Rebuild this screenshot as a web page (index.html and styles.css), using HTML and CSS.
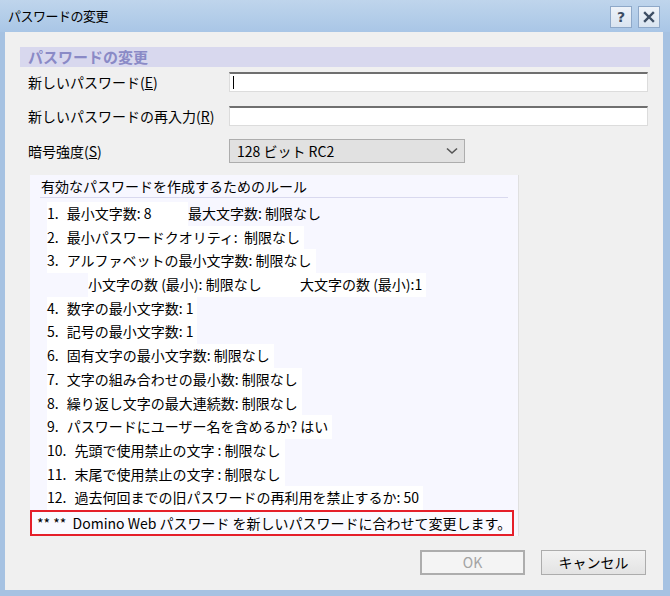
FILE: index.html
```html
<!DOCTYPE html>
<html lang="ja">
<head>
<meta charset="utf-8">
<title>パスワードの変更</title>
<link rel="stylesheet" href="styles.css">
</head>
<body>
<div class="window">
  <div class="titlebar">
    <span class="title">パスワードの変更</span>
    <div class="tb-buttons">
      <span class="tb-btn help">?</span>
      <span class="tb-btn close"><svg width="12" height="12" viewBox="0 0 12 12"><path d="M2 2 L10 10 M10 2 L2 10" stroke="#3c4d63" stroke-width="2.4" stroke-linecap="square"/></svg></span>
    </div>
  </div>
  <div class="client">
    <div class="section-head">パスワードの変更</div>
    <div class="form-row r1">
      <label>新しいパスワード(<u>E</u>)</label>
      <div class="input"><span class="caret"></span></div>
    </div>
    <div class="form-row r2">
      <label>新しいパスワードの再入力(<u>R</u>)</label>
      <div class="input"></div>
    </div>
    <div class="form-row r3">
      <label>暗号強度(<u>S</u>)</label>
      <div class="select">
        <span>128 ビット RC2</span>
        <svg width="12" height="8" viewBox="0 0 12 8"><path d="M1 1.5 L6 6 L11 1.5" fill="none" stroke="#555" stroke-width="1.6"/></svg>
      </div>
    </div>
    <div class="rules">
      <div class="rules-head">有効なパスワードを作成するためのルール</div>
      <ul class="items">
        <li><span class="cell w1"><span class="n">1.</span>最小文字数: 8</span><span>最大文字数: 制限なし</span></li>
        <li><span class="cell"><span class="n">2.</span>最小パスワードクオリティ:&nbsp; 制限なし</span></li>
        <li><span class="cell"><span class="n">3.</span>アルファベットの最小文字数: 制限なし</span></li>
        <li class="sub"><span class="cell w2">小文字の数 (最小): 制限なし</span><span class="cell">大文字の数 (最小):1</span></li>
        <li><span class="cell"><span class="n">4.</span>数字の最小文字数: 1</span></li>
        <li><span class="cell"><span class="n">5.</span>記号の最小文字数: 1</span></li>
        <li><span class="cell"><span class="n">6.</span>固有文字の最小文字数: 制限なし</span></li>
        <li><span class="cell"><span class="n">7.</span>文字の組み合わせの最小数: 制限なし</span></li>
        <li><span class="cell"><span class="n">8.</span>繰り返し文字の最大連続数: 制限なし</span></li>
        <li><span class="cell"><span class="n">9.</span>パスワードにユーザー名を含めるか? はい</span></li>
        <li><span class="cell"><span class="n">10.</span>先頭で使用禁止の文字 : 制限なし</span></li>
        <li><span class="cell"><span class="n">11.</span>末尾で使用禁止の文字 : 制限なし</span></li>
        <li><span class="cell"><span class="n">12.</span>過去何回までの旧パスワードの再利用を禁止するか: 50</span></li>
      </ul>
      <div class="notice">** **&nbsp; Domino Web パスワード を新しいパスワードに合わせて変更します。</div>
    </div>
    <div class="buttons">
      <button class="btn disabled" disabled>OK</button>
      <button class="btn">キャンセル</button>
    </div>
  </div>
</div>
</body>
</html>
```

FILE: styles.css
```css
html, body {
  margin: 0;
  padding: 0;
}
body {
  width: 670px;
  height: 596px;
  overflow: hidden;
  font-family: "Noto Sans CJK JP", "Noto Sans", sans-serif;
  font-size: 14px;
  color: #000;
}
.window {
  height: 596px;
  display: flex;
  flex-direction: column;
  background: #a6c2e2;
}
.titlebar {
  height: 32px;
  flex: none;
  display: flex;
  align-items: center;
  justify-content: space-between;
  padding: 0 10px 0 8px;
  background: linear-gradient(#bfd5ec, #a9c6e6);
}
.title {
  font-size: 13px;
  letter-spacing: -0.5px;
  line-height: 32px;
}
.tb-buttons {
  display: flex;
  gap: 6px;
  margin-top: 2px;
}
.tb-btn {
  width: 22px;
  height: 22px;
  box-sizing: border-box;
  border: 1px solid #8ea8c8;
  background: linear-gradient(#eef3f9, #d9e4f0);
  display: flex;
  align-items: center;
  justify-content: center;
  font-family: "DejaVu Sans", sans-serif;
  font-weight: bold;
  font-size: 14px;
  color: #3c4d63;
}
.client {
  flex: 1;
  margin: 0 7px 6px 5px;
  background: #f0f0f0;
  padding: 15px 13px 0 15px;
}
.section-head {
  height: 20px;
  line-height: 20px;
  background: #d8d8ee;
  color: #8a8ac6;
  font-weight: bold;
  font-size: 15px;
  padding-left: 8px;
}
.form-row {
  display: flex;
  align-items: center;
  margin-left: 8px;
  margin-right: 2px;
}
.form-row label {
  width: 201px;
  flex: none;
  white-space: nowrap;
}
.r1 { margin-top: 5px; }
.r2 { margin-top: 14px; }
.r3 { margin-top: 13px; }
.input {
  flex: 1;
  height: 20px;
  box-sizing: border-box;
  background: #fff;
  border: 1px solid #dcdcdc;
  border-top: 2px solid #6f6f6f;
  display: flex;
  align-items: center;
}
.caret {
  width: 1px;
  height: 13px;
  background: #000;
  margin-left: 3px;
}
.select {
  width: 236px;
  height: 24px;
  box-sizing: border-box;
  border: 1px solid #adadad;
  background: #e1e1e1;
  display: flex;
  align-items: center;
  justify-content: space-between;
  padding: 0 6px 0 7px;
}
.rules {
  margin: 12px 0 0 10px;
  width: 489px;
  box-sizing: border-box;
  background: #f7f7ff;
  border-right: 1px solid #e0e0e0;
}
.rules-head {
  height: 22px;
  line-height: 22px;
  margin: 0 10px;
  padding-left: 1px;
  border-bottom: 1px solid #d9d9ef;
}
.items {
  list-style: none;
  margin: 0;
  padding: 4px 0 0 0;
}
.items li {
  height: 23.7px;
  line-height: 23.7px;
  padding-left: 17px;
  white-space: nowrap;
}
.items li.sub {
  padding-left: 58px;
}
.cell {
  display: inline-block;
  background: #fff;
  padding-right: 4px;
}
.w1 { width: 137px; }
.w2 { width: 208px; }
.n {
  display: inline-block;
  margin-right: 8px;
}
.notice {
  width: 484px;
  height: 26px;
  box-sizing: border-box;
  border: 2px solid #e51f2a;
  background: #fafaff;
  line-height: 22px;
  padding-left: 5px;
  white-space: nowrap;
}
.buttons {
  display: flex;
  justify-content: flex-end;
  gap: 16px;
  margin: 14px 4px 0 0;
}
.btn {
  width: 105px;
  height: 25px;
  box-sizing: border-box;
  font-family: "Noto Sans CJK JP", "Noto Sans", sans-serif;
  font-size: 14px;
  line-height: 20px;
  padding: 0;
  border: 1px solid #acacac;
  background: linear-gradient(#f2f2f2, #e3e3e3);
  color: #000;
}
.btn.disabled {
  border: 2px solid #adadad;
  background: #f4f4f4;
  color: #a3a3a3;
}
```
